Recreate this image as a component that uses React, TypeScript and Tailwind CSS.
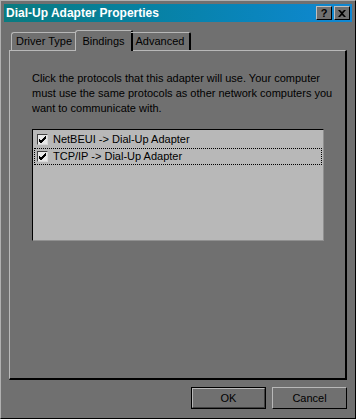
import React from "react";

const font = { fontFamily: '"Liberation Sans", Arial, sans-serif' };

function Check() {
  return (
    <div className="w-[11px] h-[11px] bg-[#e8e8e8] border-t border-l border-t-[#404040] border-l-[#404040] border-b border-r border-b-[#d8d8d8] border-r-[#d8d8d8] flex items-center justify-center shrink-0">
      <svg width="9" height="9" viewBox="0 0 9 9">
        <path d="M1 4 L3 6 L8 1 M1 5 L3 7 L8 2 M1 6 L3 8 L8 3" stroke="#000" strokeWidth="1" fill="none" />
      </svg>
    </div>
  );
}

export default function App() {
  return (
    <div
      className="w-[356px] h-[419px] bg-[#707070] flex flex-col p-[3px] border-l border-t border-l-[#b0b0b0] border-t-[#b0b0b0] border-r border-b border-r-black border-b-black"
      style={font}
    >
      {/* title bar */}
      <div className="h-[18px] bg-gradient-to-r from-[#0a7b80] to-[#1088d4] flex items-center pl-[2px] pr-[2px]">
        <span className="text-white font-bold text-[12px] leading-none">Dial-Up Adapter Properties</span>
        <div className="ml-auto flex gap-[2px]">
          <div className="w-[16px] h-[14px] bg-[#707070] border-t border-l border-t-[#c0c0c0] border-l-[#c0c0c0] border-b border-r border-b-black border-r-black flex items-center justify-center">
            <span className="text-black font-bold text-[11px] leading-none">?</span>
          </div>
          <div className="w-[16px] h-[14px] bg-[#707070] border-t border-l border-t-[#c0c0c0] border-l-[#c0c0c0] border-b border-r border-b-black border-r-black flex items-center justify-center">
            <svg width="8" height="7" viewBox="0 0 8 7">
              <path d="M0 0 L2 0 L4 2 L6 0 L8 0 L5 3.5 L8 7 L6 7 L4 5 L2 7 L0 7 L3 3.5 Z" fill="#000" />
            </svg>
          </div>
        </div>
      </div>

      {/* tabs + panel */}
      <div className="mt-[8px] ml-[5px] mr-[5px] flex flex-col">
        <div className="flex items-end h-[20px] pl-[2px] relative z-10">
          <div className="h-[18px] w-[66px] border-t border-l border-t-[#b8b8b8] border-l-[#b8b8b8] border-r border-r-black rounded-tl-[3px] rounded-tr-[2px] flex items-center justify-center text-[11px] text-black">
            Driver Type
          </div>
          <div className="h-[21px] w-[58px] -mx-[2px] mb-[-1px] bg-[#707070] border-t border-l border-t-[#b8b8b8] border-l-[#b8b8b8] border-r-2 border-r-black rounded-tl-[3px] rounded-tr-[2px] flex items-start pt-[2px] justify-center text-[11px] text-black">
            Bindings
          </div>
          <div className="h-[18px] w-[60px] border-t border-t-[#b8b8b8] border-r-2 border-r-black rounded-tr-[2px] flex items-center justify-center text-[11px] text-black">
            Advanced
          </div>
        </div>
        <div className="h-[330px] border-t border-l border-t-[#b8b8b8] border-l-[#b8b8b8] border-r-2 border-b-2 border-r-black border-b-black pl-[22px] pt-[20px] flex flex-col">
          <p className="text-[11px] leading-[15px] text-black whitespace-nowrap">
            Click the protocols that this adapter will use. Your computer
            <br />
            must use the same protocols as other network computers you
            <br />
            want to communicate with.
          </p>
          <div className="mt-[13px] w-[292px] h-[112px] bg-[#b8b8b8] border-t border-l border-t-black border-l-black border-b border-r border-b-[#909090] border-r-[#909090] pt-[1px] px-[1px]">
            <div className="h-[17px] flex items-center gap-[5px] pl-[3px]">
              <Check />
              <span className="text-[11px] text-black">NetBEUI -&gt; Dial-Up Adapter</span>
            </div>
            <div className="h-[17px] flex items-center gap-[5px] pl-[2px] border border-dotted border-black">
              <Check />
              <span className="text-[11px] text-black">TCP/IP -&gt; Dial-Up Adapter</span>
            </div>
          </div>
        </div>
      </div>

      {/* buttons */}
      <div className="mt-[7px] mr-[5px] flex justify-end gap-[6px]">
        <div className="w-[75px] h-[22px] border border-black">
          <div className="w-full h-full bg-[#707070] border-t border-l border-t-[#b8b8b8] border-l-[#b8b8b8] border-b border-r border-b-[#404040] border-r-[#404040] flex items-center justify-center text-[11px] text-black">
            OK
          </div>
        </div>
        <div className="w-[75px] h-[22px] bg-[#707070] border-t border-l border-t-[#b8b8b8] border-l-[#b8b8b8] border-b border-r border-b-black border-r-black flex items-center justify-center text-[11px] text-black">
          Cancel
        </div>
      </div>
    </div>
  );
}
